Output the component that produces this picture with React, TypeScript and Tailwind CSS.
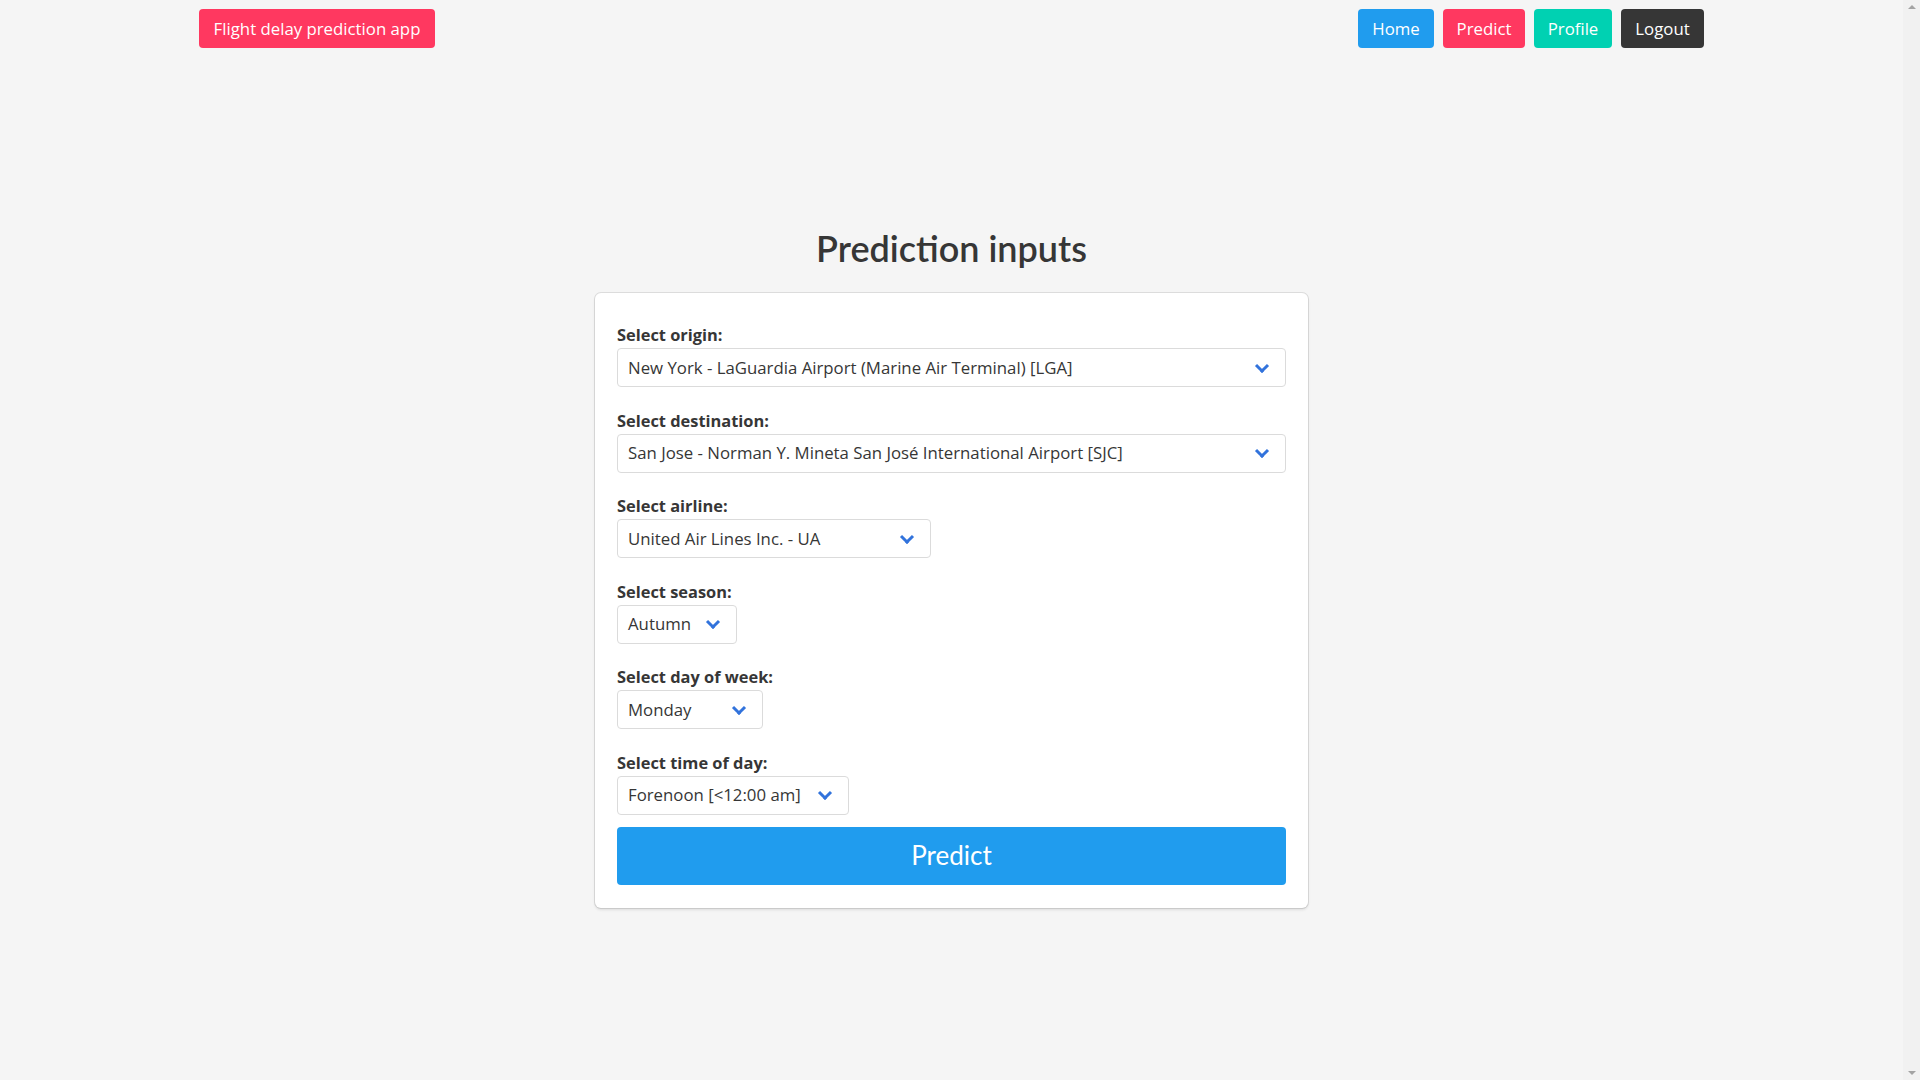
import React from "react";

type SelectProps = {
  label: string;
  value: string;
  className?: string;
};

const font = { fontFamily: "'Open Sans', 'Noto Sans', sans-serif" };
const titleFont = { fontFamily: "Lato, 'Open Sans', sans-serif" };

const NavButton = ({ text, className }: { text: string; className: string }) => {
  return (
    <a
      href="#"
      className={`${className} flex h-[39px] items-center justify-center rounded-[4px] text-[16.8px] text-white`}
    >
      {text}
    </a>
  );
};

const Chevron = () => (
  <span className="absolute top-1/2 right-[18px] mt-[-7px] h-[10px] w-[10px] -rotate-45 border-b-[3px] border-l-[3px] border-[#3273dc]"></span>
);

const SelectField = ({ label, value, className }: SelectProps) => {
  return (
    <div className="mb-[21.5px] flex flex-col items-start">
      <label className="mb-[1px] h-6 text-[16.4px] leading-6 font-bold text-[#363636]">
        {label}
      </label>
      <div
        className={`${className} relative flex h-[39px] items-center rounded-[4px] border border-[#dbdbdb] bg-white pl-[10px] text-[16.8px] text-[#363636]`}
      >
        <span className="whitespace-nowrap">{value}</span>
        <Chevron />
      </div>
    </div>
  );
};

export default function App() {
  return (
    <div className="flex min-h-screen bg-[#f5f5f5]" style={font}>
      <div className="w-[1903px] h-[1080px]">
        {/* navbar */}
        <nav className="flex items-start justify-between px-[199px] pt-[9px]">
          <NavButton text="Flight delay prediction app" className="w-[236px] bg-[#ff3860]" />
          <div className="flex gap-[9px]">
            <NavButton text="Home" className="w-[76px] bg-[#209cee]" />
            <NavButton text="Predict" className="w-[82px] bg-[#ff3860]" />
            <NavButton text="Profile" className="w-[78px] bg-[#00d1b2]" />
            <NavButton text="Logout" className="w-[83px] bg-[#363636]" />
          </div>
        </nav>

        <section className="mt-[180px] flex flex-col items-center">
          <h1
            className="mb-[25px] h-10 text-[36px] leading-10 font-semibold text-[#363636]"
            style={titleFont}
          >
            Prediction inputs
          </h1>
          <div className="w-[713px] rounded-[6px] bg-white px-[22px] pt-[30px] pb-[23px] shadow-[0_2px_3px_rgba(10,10,10,0.1),0_0_0_1px_rgba(10,10,10,0.1)]">
            <SelectField
              label="Select origin:"
              value="New York - LaGuardia Airport (Marine Air Terminal) [LGA]"
              className="w-full"
            />
            <SelectField
              label="Select destination:"
              value="San Jose - Norman Y. Mineta San José International Airport [SJC]"
              className="w-full"
            />
            <SelectField label="Select airline:" value="United Air Lines Inc. - UA" className="w-[314px]" />
            <SelectField label="Select season:" value="Autumn" className="w-[120px]" />
            <SelectField label="Select day of week:" value="Monday" className="w-[146px]" />
            <div className="flex flex-col items-start">
              <label className="mb-[1px] h-6 text-[16.4px] leading-6 font-bold text-[#363636]">
                Select time of day:
              </label>
              <div className="relative flex h-[39px] w-[232px] items-center rounded-[4px] border border-[#dbdbdb] bg-white pl-[10px] text-[16.8px] text-[#363636]">
                <span className="whitespace-nowrap">Forenoon [&lt;12:00 am]</span>
                <Chevron />
              </div>
            </div>
            <button
              className="mt-[12px] flex h-[58px] w-full items-center justify-center rounded-[4px] bg-[#209cee] text-[26px] text-white"
              style={titleFont}
            >
              Predict
            </button>
          </div>
        </section>
      </div>
      {/* scrollbar */}
      <div className="flex w-[17px] flex-col items-center justify-between bg-[#f1f1f1] py-[5px]">
        <span className="h-0 w-0 border-x-[4px] border-b-[4px] border-x-transparent border-b-[#a3a3a3]"></span>
        <span className="h-0 w-0 border-x-[4px] border-t-[4px] border-x-transparent border-t-[#a3a3a3]"></span>
      </div>
    </div>
  );
}
